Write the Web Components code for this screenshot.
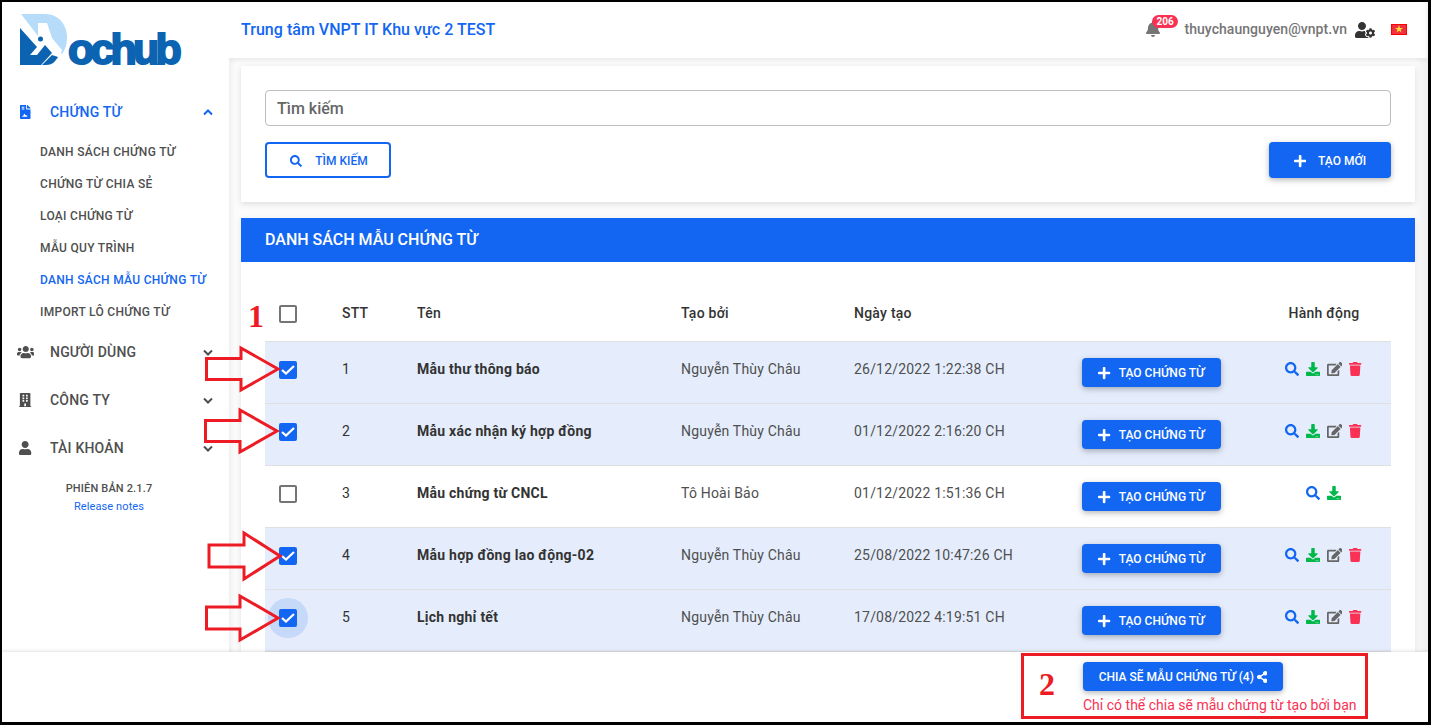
<!DOCTYPE html>
<html lang="vi">
<head>
<meta charset="utf-8">
<title>Dochub</title>
<style>
html, body { margin: 0; height: 100%; overflow: hidden; background: #fff; }
body { font-family: Roboto, "Liberation Sans", sans-serif; }
</style>
</head>
<body>
<app-shell>
  <side-nav slot="side"></side-nav>
  <top-bar slot="top"></top-bar>
  <search-card slot="main"></search-card>
  <list-card slot="main" title="DANH SÁCH MẪU CHỨNG TỪ">
    <doc-head></doc-head>
    <doc-row no="1" name="Mẫu thư thông báo" by="Nguyễn Thùy Châu" date="26/12/2022 1:22:38 CH" checked full></doc-row>
    <doc-row no="2" name="Mẫu xác nhận ký hợp đồng" by="Nguyễn Thùy Châu" date="01/12/2022 2:16:20 CH" checked full></doc-row>
    <doc-row no="3" name="Mẫu chứng từ CNCL" by="Tô Hoài Bảo" date="01/12/2022 1:51:36 CH"></doc-row>
    <doc-row no="4" name="Mẫu hợp đồng lao động-02" by="Nguyễn Thùy Châu" date="25/08/2022 10:47:26 CH" checked full></doc-row>
    <doc-row no="5" name="Lịch nghỉ tết" by="Nguyễn Thùy Châu" date="17/08/2022 4:19:51 CH" checked full focus></doc-row>
  </list-card>
  <share-bar slot="foot"></share-bar>
  <mark-up slot="over"></mark-up>
</app-shell>

<script>
// font awesome 5 solid shapes, [viewBox width, path]
const ICONS = {
  search: [512, "M505 442.7L405.3 343c-4.5-4.5-10.6-7-17-7H372c27.6-35.3 44-79.7 44-128C416 93.1 322.9 0 208 0S0 93.1 0 208s93.1 208 208 208c48.3 0 92.7-16.4 128-44v16.3c0 6.4 2.5 12.5 7 17l99.7 99.7c9.4 9.4 24.6 9.4 33.9 0l28.3-28.3c9.4-9.4 9.4-24.6.1-34zM208 336c-70.7 0-128-57.2-128-128 0-70.7 57.2-128 128-128 70.7 0 128 57.2 128 128 0 70.7-57.2 128-128 128z"],
  download: [512, "M216 0h80c13.3 0 24 10.7 24 24v168h87.7c17.8 0 26.7 21.5 14.1 34.1L269.7 378.3c-7.5 7.5-19.8 7.5-27.3 0L90.1 226.1c-12.6-12.6-3.7-34.1 14.1-34.1H192V24c0-13.3 10.7-24 24-24zm296 376v112c0 13.3-10.7 24-24 24H24c-13.3 0-24-10.7-24-24V376c0-13.3 10.7-24 24-24h146.7l49 49c20.1 20.1 52.5 20.1 72.6 0l49-49H488c13.3 0 24 10.7 24 24zm-124 88c0-11-9-20-20-20s-20 9-20 20 9 20 20 20 20-9 20-20zm64 0c0-11-9-20-20-20s-20 9-20 20 9 20 20 20 20-9 20-20z"],
  edit: [576, "M402.6 83.2l90.2 90.2c3.8 3.8 3.8 10 0 13.8L274.4 405.6l-92.8 10.3c-12.4 1.4-22.9-9.1-21.5-21.5l10.3-92.8L388.8 83.2c3.8-3.8 10-3.8 13.8 0zm162-22.9l-48.8-48.8c-15.2-15.2-39.9-15.2-55.2 0l-35.4 35.4c-3.8 3.8-3.8 10 0 13.8l90.2 90.2c3.8 3.8 10 3.8 13.8 0l35.4-35.4c15.2-15.3 15.2-40 0-55.2zM384 346.2V448H64V128h229.8c3.2 0 6.2-1.3 8.5-3.5l40-40c7.6-7.6 2.2-20.5-8.5-20.5H48C21.5 64 0 85.5 0 112v352c0 26.5 21.5 48 48 48h352c26.5 0 48-21.5 48-48V306.2c0-10.7-12.9-16-20.5-8.5l-40 40c-2.2 2.3-3.5 5.3-3.5 8.5z"],
  trash: [448, "M432 32H312l-9.4-18.7A24 24 0 0 0 281.1 0H166.8a23.72 23.72 0 0 0-21.4 13.3L136 32H16A16 16 0 0 0 0 48v32a16 16 0 0 0 16 16h416a16 16 0 0 0 16-16V48a16 16 0 0 0-16-16zM53.2 467a48 48 0 0 0 47.9 45h245.8a48 48 0 0 0 47.9-45L416 128H32z"],
  plus: [448, "M416 208H272V64c0-17.67-14.33-32-32-32h-32c-17.67 0-32 14.33-32 32v144H32c-17.67 0-32 14.33-32 32v32c0 17.67 14.33 32 32 32h144v144c0 17.67 14.33 32 32 32h32c17.67 0 32-14.33 32-32V304h144c17.67 0 32-14.33 32-32v-32c0-17.67-14.33-32-32-32z"],
  bell: [448, "M224 512c35.32 0 63.97-28.65 63.97-64H160.03c0 35.35 28.65 64 63.97 64zm215.39-149.71c-19.32-20.76-55.47-51.99-55.47-154.29 0-77.7-54.48-139.9-127.94-155.16V32c0-17.67-14.32-32-31.98-32s-31.98 14.33-31.98 32v20.84C118.56 68.1 64.08 130.3 64.08 208c0 102.3-36.15 133.53-55.47 154.29-6 6.45-8.66 14.16-8.61 21.71.11 16.4 12.98 32 32.1 32h383.8c19.12 0 32-15.6 32.1-32 .05-7.55-2.61-15.27-8.61-21.71z"],
  user: [448, "M224 256c70.7 0 128-57.3 128-128S294.7 0 224 0 96 57.3 96 128s57.3 128 128 128zm89.6 32h-16.7c-22.2 10.2-46.9 16-72.9 16s-50.6-5.8-72.9-16h-16.7C60.2 288 0 348.2 0 422.4V464c0 26.5 21.5 48 48 48h352c26.5 0 48-21.5 48-48v-41.6c0-74.2-60.2-134.4-134.4-134.4z"],
  users: [640, "M96 224c35.3 0 64-28.7 64-64s-28.7-64-64-64-64 28.7-64 64 28.7 64 64 64zm448 0c35.3 0 64-28.7 64-64s-28.7-64-64-64-64 28.7-64 64 28.7 64 64 64zm32 32h-64c-17.6 0-33.5 7.1-45.1 18.6 40.3 22.1 68.9 62 75.1 109.4h66c17.7 0 32-14.3 32-32v-32c0-35.3-28.7-64-64-64zm-256 0c61.9 0 112-50.1 112-112S381.9 32 320 32 208 82.1 208 144s50.1 112 112 112zm76.8 32h-8.3c-20.8 10-43.9 16-68.5 16s-47.6-6-68.5-16h-8.3C179.6 288 128 339.6 128 403.2V432c0 26.5 21.5 48 48 48h288c26.5 0 48-21.5 48-48v-28.8c0-63.6-51.6-115.2-115.2-115.2zm-223.7-13.4C161.5 263.1 145.6 256 128 256H64c-35.3 0-64 28.7-64 64v32c0 17.7 14.3 32 32 32h65.9c6.3-47.4 34.9-87.3 75.2-109.4z"],
  building: [448, "M436 480h-20V24c0-13.255-10.745-24-24-24H56C42.745 0 32 10.745 32 24v456H12c-6.627 0-12 5.373-12 12v20h448v-20c0-6.627-5.373-12-12-12zM128 76c0-6.627 5.373-12 12-12h40c6.627 0 12 5.373 12 12v40c0 6.627-5.373 12-12 12h-40c-6.627 0-12-5.373-12-12V76zm0 96c0-6.627 5.373-12 12-12h40c6.627 0 12 5.373 12 12v40c0 6.627-5.373 12-12 12h-40c-6.627 0-12-5.373-12-12v-40zm52 148h-40c-6.627 0-12-5.373-12-12v-40c0-6.627 5.373-12 12-12h40c6.627 0 12 5.373 12 12v40c0 6.627-5.373 12-12 12zm76 160h-64v-84c0-6.627 5.373-12 12-12h40c6.627 0 12 5.373 12 12v84zm64-172c0 6.627-5.373 12-12 12h-40c-6.627 0-12-5.373-12-12v-40c0-6.627 5.373-12 12-12h40c6.627 0 12 5.373 12 12v40zm0-96c0 6.627-5.373 12-12 12h-40c-6.627 0-12-5.373-12-12v-40c0-6.627 5.373-12 12-12h40c6.627 0 12 5.373 12 12v40zm0-96c0 6.627-5.373 12-12 12h-40c-6.627 0-12-5.373-12-12V76c0-6.627 5.373-12 12-12h40c6.627 0 12 5.373 12 12v40z"],
  share: [448, "M352 320c-22.608 0-43.387 7.819-59.79 20.895l-102.486-64.054a96.551 96.551 0 0 0 0-41.683l102.486-64.054C308.613 184.181 329.392 192 352 192c53.019 0 96-42.981 96-96S405.019 0 352 0s-96 42.981-96 96c0 7.158.79 14.13 2.276 20.841L155.79 180.895C139.387 167.819 118.608 160 96 160c-53.019 0-96 42.981-96 96s42.981 96 96 96c22.608 0 43.387-7.819 59.79-20.895l102.486 64.054A96.301 96.301 0 0 0 256 416c0 53.019 42.981 96 96 96s96-42.981 96-96-42.981-96-96-96z"],
  usercog: [640, "M610.5 373.3c2.6-14.1 2.6-28.5 0-42.6l25.8-14.9c3-1.7 4.3-5.2 3.3-8.5-6.7-21.6-18.2-41.2-33.2-57.4-2.3-2.5-6-3.1-9-1.4l-25.8 14.9c-10.9-9.3-23.4-16.5-36.9-21.3v-29.8c0-3.4-2.4-6.4-5.7-7.1-22.3-5-45-4.8-66.2 0-3.3.7-5.7 3.7-5.7 7.1v29.8c-13.5 4.8-26 12-36.9 21.3l-25.8-14.9c-2.9-1.7-6.7-1.1-9 1.4-15 16.2-26.5 35.8-33.2 57.4-1 3.3.4 6.8 3.3 8.5l25.8 14.9c-2.6 14.1-2.6 28.5 0 42.6l-25.8 14.9c-3 1.7-4.3 5.2-3.3 8.5 6.7 21.6 18.2 41.1 33.2 57.4 2.3 2.5 6 3.1 9 1.4l25.8-14.9c10.9 9.3 23.4 16.5 36.9 21.3v29.8c0 3.4 2.4 6.4 5.7 7.1 22.3 5 45 4.8 66.2 0 3.3-.7 5.7-3.7 5.7-7.1v-29.8c13.5-4.8 26-12 36.9-21.3l25.8 14.9c2.9 1.7 6.7 1.1 9-1.4 15-16.2 26.5-35.8 33.2-57.4 1-3.3-.4-6.8-3.3-8.5l-25.8-14.9zM496 400.5c-26.8 0-48.5-21.8-48.5-48.5s21.8-48.5 48.5-48.5 48.5 21.8 48.5 48.5-21.7 48.5-48.5 48.5zM224 256c70.7 0 128-57.3 128-128S294.7 0 224 0 96 57.3 96 128s57.3 128 128 128zm201.2 226.5c-2.3-1.2-4.6-2.6-6.8-3.9l-7.9 4.6c-6 3.4-12.8 5.3-19.6 5.3-10.9 0-21.4-4.6-28.9-12.6-18.3-19.8-32.3-43.9-40.2-69.6-5.5-17.7 1.9-36.4 17.9-45.7l7.9-4.6c-.1-2.6-.1-5.2 0-7.8l-7.9-4.6c-16-9.2-23.4-28-17.9-45.7.9-2.9 2.2-5.8 3.2-8.7-3.8-.3-7.5-1.2-11.4-1.2h-16.7c-22.2 10.2-46.9 16-72.9 16s-50.6-5.8-72.9-16h-16.7C60.2 288 0 348.2 0 422.4V464c0 26.5 21.5 48 48 48h352c10.1 0 19.5-3.2 27.2-8.5-1.2-3.8-2-7.7-2-11.8v-9.2z"],
  filesign: [384, "M224 136V0H24C10.7 0 0 10.7 0 24v464c0 13.3 10.7 24 24 24h336c13.3 0 24-10.7 24-24V160H248c-13.2 0-24-10.8-24-24zM64 72c0-4.4 3.6-8 8-8h80c4.4 0 8 3.600 8 8v16c0 4.400-3.600 8-8 8H72c-4.400 0-8-3.600-8-8zm0 64c0-4.400 3.600-8 8-8h80c4.400 0 8 3.600 8 8v16c0 4.400-3.600 8-8 8H72c-4.400 0-8-3.600-8-8zm192 296H88c-4.400 0-8-3.600-8-8v-16c0-4.400 3.600-8 8-8h30c12-36 24-78 42-78 16 0 24 34 34 50 14-12 34-4 44 12h18c4.400 0 8 3.600 8 8v32c0 4.400-3.600 8-8 8zM377 105L279 7c-4.500-4.500-10.600-7-17-7h-6v128h128v-6.100c0-6.300-2.500-12.400-7-16.900z"]
};
const iconSvg = (name, h) => {
  const [w, d] = ICONS[name];
  return `<svg viewBox="0 0 ${w} 512" height="${h}" width="${(h * w / 512).toFixed(2)}" fill="currentColor" style="display:block"><path d="${d}"/></svg>`;
};

class AppShell extends HTMLElement {
  constructor() {
    super();
    this.attachShadow({ mode: "open" }).innerHTML = `
<style>
:host { display: block; position: relative; box-sizing: border-box; width: 1431px; height: 725px;
  border: solid #000; border-width: 2px 3px 3px 2px; overflow: hidden; background: #fbfbfb; }
.frame { display: grid; grid-template-columns: 227px 1fr; grid-template-rows: 650px 70px; height: 100%; }
.side { grid-row: 1; grid-column: 1; background: #fff; position: relative; z-index: 2; overflow: hidden; }
.right { grid-row: 1; grid-column: 2; display: flex; flex-direction: column; min-width: 0; overflow: hidden; }
.content { flex: 1; display: flex; flex-direction: column; gap: 16px; padding: 8px 13px 0 12px; min-height: 0;
  background: linear-gradient(90deg, #f0f0f0, #fbfbfb 6px, #fbfbfb 1186px, #f0f0f0); }
.foot { grid-row: 2; grid-column: 1 / 3; position: relative; z-index: 3; }
</style>
<div class="frame">
  <div class="side"><slot name="side"></slot></div>
  <div class="right">
    <slot name="top"></slot>
    <div class="content"><slot name="main"></slot></div>
  </div>
  <div class="foot"><slot name="foot"></slot></div>
</div>
<slot name="over"></slot>`;
  }
}

class BlueButton extends HTMLElement {
  constructor() {
    super();
    this.attachShadow({ mode: "open" }).innerHTML = `
<style>
:host { display: inline-flex; align-items: center; justify-content: center; box-sizing: border-box; height: 36px;
  border-radius: 4px; background: #1266f1; color: #fff; font: 500 12px/1 Roboto, sans-serif; text-transform: uppercase;
  box-shadow: 0 2px 5px rgba(0,0,0,.2), 0 2px 10px rgba(0,0,0,.1); }
:host([outline]) { background: #fff; color: #1266f1; border: 2px solid #1266f1; box-shadow: none; }
</style>
<slot></slot>`;
  }
}

class CheckMark extends HTMLElement {
  connectedCallback() {
    const root = this.attachShadow({ mode: "open" });
    root.innerHTML = `
<style>
:host { display: block; width: 18px; height: 18px; position: relative; }
.box { box-sizing: border-box; width: 18px; height: 18px; border: 2px solid #757575; border-radius: 2px; position: relative; }
:host([checked]) .box { background: #1266f1; border-color: #1266f1; }
svg { position: absolute; left: 0; top: 2px; }
.halo { position: absolute; left: -11px; top: -11px; width: 40px; height: 40px; border-radius: 50%; background: #c6d9f9; }
</style>
${this.hasAttribute("focus") ? '<div class="halo"></div>' : ""}
<div class="box">${this.hasAttribute("checked") ? '<svg width="14" height="10" viewBox="0 0 14 10"><path d="M1 5 5 8.500 13 1" fill="none" stroke="#fff" stroke-width="2.300"/></svg>' : ""}</div>`;
  }
}

class SideNav extends HTMLElement {
  constructor() {
    super();
    const group = (icon, size, label, open) => `
<div class="group${open ? " open" : ""}">
  <span class="ic">${iconSvg(icon, size)}</span><span class="lb">${label}</span>
  <svg class="chev" width="10" height="7" viewBox="0 0 10 7"><path d="${open ? "M1 5.500 5 1.500 9 5.500" : "M1 1.500 5 5.500 9 1.500"}" fill="none" stroke="currentColor" stroke-width="2"/></svg>
</div>`;
    const subs = ["DANH SÁCH CHỨNG TỪ", "CHỨNG TỪ CHIA SẺ", "LOẠI CHỨNG TỪ", "MẪU QUY TRÌNH", "DANH SÁCH MẪU CHỨNG TỪ", "IMPORT LÔ CHỨNG TỪ"];
    this.attachShadow({ mode: "open" }).innerHTML = `
<style>
:host { display: block; height: 100%; background: #fff; color: #4f4f4f; font-family: Roboto, sans-serif; }
.logo { height: 86px; position: relative; }
.logo svg { position: absolute; left: 18px; top: 10px; }
.logo b { position: absolute; left: 66px; top: 26px; font: 700 43px/1 "Liberation Sans", sans-serif; color: #0b63b1;
  -webkit-text-stroke: 2px #0b63b1; letter-spacing: -3.800px; }
.group { height: 48px; display: flex; align-items: center; font-size: 14px; font-weight: 500; position: relative; }
.group .ic { width: 47px; margin-right: 1px; display: flex; justify-content: center; }
.group .lb { letter-spacing: .2px; }
.group .chev { position: absolute; left: 201px; top: 21px; }
.group.open { color: #1266f1; }
.sub { display: flex; flex-direction: column; }
.sub div { height: 32px; line-height: 32px; padding-left: 38px; font-size: 12px; font-weight: 500; letter-spacing: .3px; }
.sub .on { color: #1266f1; }
.ver { text-align: center; font-size: 11px; font-weight: 500; padding-top: 10px; width: 214px; letter-spacing: .15px; }
.ver a { display: block; color: #1266f1; font-weight: 400; margin-top: 5px; letter-spacing: .1px; }
</style>
<div class="logo">
  <svg width="56" height="58" viewBox="20 12 56 58">
    <path fill="#b6dcfa" d="M21 14H45C59 14 67 25 67 38C67 44 65.500 49 62 54L38 36Z"/>
    <path fill="#fff" d="M38 23H47L52 38L62 50L60 56L38 40Z"/>
    <path fill="#0b63b1" d="M20 28L37 47 L30 55 H37 L45 45 L52 53 L41 65H20Z"/>
    <path fill="#0b63b1" d="M52 55L58 57C55 62 52 65 46 65H42Z"/>
    <circle cx="40.500" cy="39" r="2.500" fill="#0b63b1"/>
  </svg>
  <b>ochub</b>
</div>
${group("filesign", 14, "CHỨNG TỪ", true)}
<div class="sub">${subs.map(s => `<div class="${s.startsWith("DANH SÁCH MẪU") ? "on" : ""}">${s}</div>`).join("")}</div>
${group("users", 14, "NGƯỜI DÙNG")}
${group("building", 14, "CÔNG TY")}
${group("user", 14, "TÀI KHOẢN")}
<div class="ver">PHIÊN BẢN 2.1.7<a>Release notes</a></div>`;
  }
}

class TopBar extends HTMLElement {
  constructor() {
    super();
    this.attachShadow({ mode: "open" }).innerHTML = `
<style>
:host { display: flex; align-items: center; box-sizing: border-box; height: 56px; flex: none; background: #fff; padding: 0 21px 2px 12px;
  box-shadow: 0 2px 5px rgba(0,0,0,.08), inset -8px 0 6px -6px rgba(0,0,0,.06); font-family: Roboto, sans-serif; position: relative; z-index: 1; }
.title { color: #1266f1; font-size: 16px; font-weight: 500; flex: 1; letter-spacing: .03px; }
.bell { position: relative; color: #757575; margin-right: 24px; }
.badge { position: absolute; left: 6px; top: -6px; height: 13px; padding: 0 4px; border-radius: 7px; background: #f93154;
  color: #fff; font-size: 10px; font-weight: 700; line-height: 13px; }
.mail { color: #757575; font-size: 14px; font-weight: 500; margin-right: 8px; letter-spacing: .05px; }
.cog { color: #333; margin-right: 16px; margin-top: 2px; }
.flag { width: 16px; height: 11px; box-sizing: border-box; background: #f0303c; border: 1px solid #f00; display: flex; align-items: center; justify-content: center; }
</style>
<div class="title">Trung tâm VNPT IT Khu vực 2 TEST</div>
<div class="bell">${iconSvg("bell", 16)}<span class="badge">206</span></div>
<div class="mail">thuychaunguyen@vnpt.vn</div>
<div class="cog">${iconSvg("usercog", 16)}</div>
<div class="flag"><svg width="8" height="8" viewBox="0 0 10 10"><path fill="#fd3" d="M5 0 6.200 3.600H10L7 5.900 8.100 9.500 5 7.300 1.900 9.500 3 5.900 0 3.600H3.800Z"/></svg></div>`;
  }
}

class SearchCard extends HTMLElement {
  constructor() {
    super();
    this.attachShadow({ mode: "open" }).innerHTML = `
<style>
:host { display: block; flex: none; box-sizing: border-box; height: 136px; padding: 24px; background: #fff;
  box-shadow: 0 2px 6px rgba(0,0,0,.12); font-family: Roboto, sans-serif; }
.input { box-sizing: border-box; height: 36px; border: 1px solid #bdbdbd; border-radius: 4px; padding: 0 11px;
  display: flex; align-items: center; color: #666; font-size: 16px; font-weight: 500; }
.acts { display: flex; justify-content: space-between; margin-top: 16px; }
.s { width: 126px; padding: 1px 0 0 2px; }
.s svg { margin-right: 13px; }
.n { width: 122px; padding-top: 1px; }
.n svg { margin-right: 12px; }
</style>
<div class="input">Tìm kiếm</div>
<div class="acts">
  <blue-button class="s" outline>${iconSvg("search", 12)}Tìm kiếm</blue-button>
  <blue-button class="n">${iconSvg("plus", 14)}Tạo mới</blue-button>
</div>`;
  }
}

class ListCard extends HTMLElement {
  constructor() {
    super();
    this.attachShadow({ mode: "open" }).innerHTML = `
<style>
:host { display: block; flex: 1; background: #fff; font-family: Roboto, sans-serif; box-shadow: 0 2px 6px rgba(0,0,0,.1); }
h2 { margin: 0; height: 44px; padding: 0 24px; background: #1266f1; color: #fff; font-size: 16px; font-weight: 500; line-height: 43px; }
.body { padding: 24px 24px 0; }
</style>
<h2>${this.getAttribute("title")}</h2>
<div class="body"><slot></slot></div>`;
  }
}

const COLS = "grid-template-columns: 77px 75px 264px 173px 228px 175px 134px;";

class DocHead extends HTMLElement {
  constructor() {
    super();
    this.attachShadow({ mode: "open" }).innerHTML = `
<style>
:host { display: grid; ${COLS} height: 56px; padding-bottom: 1px; align-items: center; font-size: 14px; font-weight: 500; color: #333; letter-spacing: .25px; border-bottom: 1px solid #e0e0e0; box-sizing: border-box; }
check-mark { margin: 2px 0 0 14px; }
.c { text-align: center; }
</style>
<check-mark></check-mark><div>STT</div><div>Tên</div><div>Tạo bởi</div><div>Ngày tạo</div><div></div><div class="c">Hành động</div>`;
  }
}

class DocRow extends HTMLElement {
  connectedCallback() {
    const a = n => this.getAttribute(n);
    const flag = n => this.hasAttribute(n) ? n : "";
    const root = this.attachShadow({ mode: "open" });
    root.innerHTML = `
<style>
:host { display: grid; ${COLS} height: 62px; padding-bottom: 6px; box-sizing: border-box; align-items: center; font-size: 14px; color: #4f4f4f;
  letter-spacing: .2px; border-bottom: 1px solid #e0e0e0; }
:host([checked]) { background: #e5edfc; }
check-mark { margin: 0 0 0 14px; }
.name { font-weight: 700; color: #333; letter-spacing: .25px; margin-top: -2px; }
.t { margin-top: -2px; }
.no { color: #333; margin-top: -2px; }
blue-button { width: 139px; height: 29px; letter-spacing: 0; margin-top: 6px; }
blue-button svg { margin-right: 8px; }
.acts { display: flex; justify-content: center; gap: 7px; margin-top: -2px; padding-right: 2px; align-items: center; }
.b { color: #1266f1; } .g { color: #00b74a; } .d { color: #666; } .r { color: #f93154; }
</style>
<check-mark ${flag("checked")} ${flag("focus")}></check-mark>
<div class="no">${a("no")}</div>
<div class="name">${a("name")}</div>
<div class="t">${a("by")}</div>
<div class="t">${a("date")}</div>
<div><blue-button>${iconSvg("plus", 14)}Tạo chứng từ</blue-button></div>
<div class="acts">
  <span class="b">${iconSvg("search", 14)}</span>
  <span class="g">${iconSvg("download", 14)}</span>
  ${this.hasAttribute("full") ? `<span class="d">${iconSvg("edit", 14)}</span><span class="r">${iconSvg("trash", 14)}</span>` : ""}
</div>`;
  }
}

class ShareBar extends HTMLElement {
  constructor() {
    super();
    this.attachShadow({ mode: "open" }).innerHTML = `
<style>
:host { display: block; height: 70px; background: #fff; box-shadow: 0 -1px 3px rgba(0,0,0,.12); font-family: Roboto, sans-serif; padding: 10px 0 0 1081px; box-sizing: border-box; }
blue-button { width: 200px; height: 29px; letter-spacing: 0; }
blue-button svg { margin-left: 3px; }
p { margin: 5px 0 0; color: #f93154; font-size: 14px; line-height: 18px; }
</style>
<blue-button>Chia sẽ mẫu chứng từ (4)${iconSvg("share", 12)}</blue-button>
<p>Chỉ có thể chia sẽ mẫu chứng từ tạo bởi bạn</p>`;
  }
}

// red callouts drawn on top of the screenshot, coordinates are the free canvas
class MarkUp extends HTMLElement {
  constructor() {
    super();
    const arrow = (x0, x1, x2, cy, t, h) =>
      `<polygon points="${x0},${cy - t} ${x1},${cy - t} ${x1},${cy - h} ${x2},${cy} ${x1},${cy + h} ${x1},${cy + t} ${x0},${cy + t}"/>`;
    this.attachShadow({ mode: "open" }).innerHTML = `
<style>
:host { position: absolute; left: -2px; top: -2px; width: 1431px; height: 725px; pointer-events: none; z-index: 9; }
svg { position: absolute; left: 0; top: 0; }
span { position: absolute; color: #ed1c24; font: 700 32px/1 "Liberation Serif", serif; }
.box { position: absolute; left: 1021px; top: 653px; width: 347px; height: 66px; box-sizing: border-box; border: 3px solid #ed1c24; }
</style>
<svg width="1431" height="725" fill="#fff" fill-opacity="0" stroke="#ed1c24" stroke-width="3">
  ${arrow(206.500, 241, 278, 369, 10.500, 21)}
  ${arrow(205.500, 240, 277, 431, 10.500, 21)}
  ${arrow(209, 244, 280, 556, 11, 23)}
  ${arrow(206.500, 240, 278, 618, 11, 22)}
</svg>
<span style="left:248px;top:300px">1</span>
<span style="left:1039px;top:668px">2</span>
<div class="box"></div>`;
  }
}

customElements.define("app-shell", AppShell);
customElements.define("blue-button", BlueButton);
customElements.define("check-mark", CheckMark);
customElements.define("side-nav", SideNav);
customElements.define("top-bar", TopBar);
customElements.define("search-card", SearchCard);
customElements.define("list-card", ListCard);
customElements.define("doc-head", DocHead);
customElements.define("doc-row", DocRow);
customElements.define("share-bar", ShareBar);
customElements.define("mark-up", MarkUp);
</script>
</body>
</html>
